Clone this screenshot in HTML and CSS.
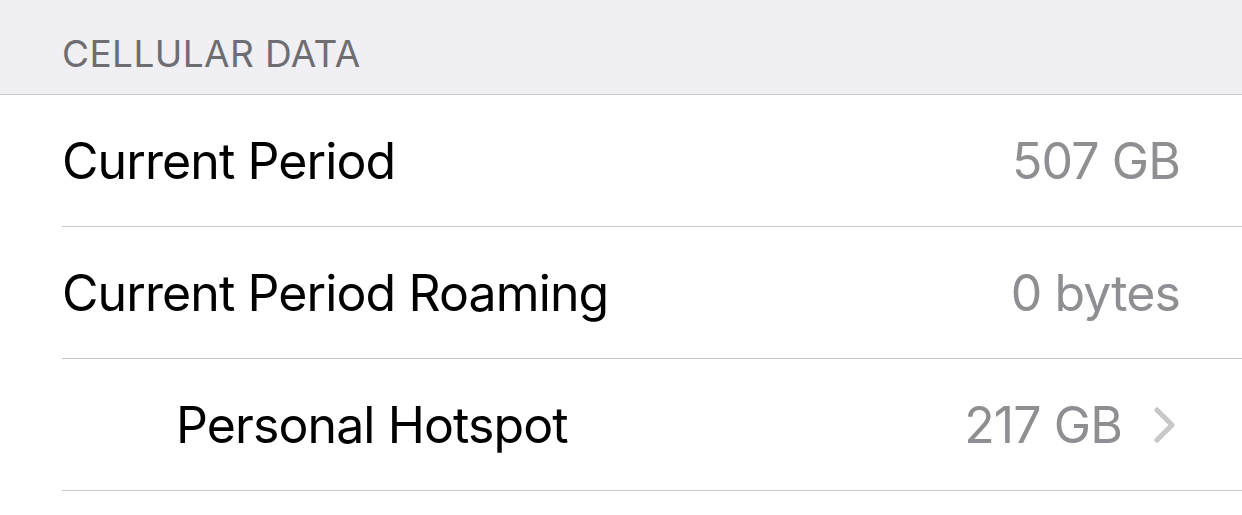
FILE: index.html
```html
<!DOCTYPE html>
<html lang="en">
<head>
  <meta charset="UTF-8" />
  <title>Cellular Data</title>
  <link rel="stylesheet" href="styles.css">
</head>
<body>
  <div class="section-header">CELLULAR DATA</div>
  <div class="group">
    <div class="row">
      <span class="label">Current Period</span>
      <span class="value">507 GB</span>
    </div>
    <div class="row">
      <span class="label">Current Period Roaming</span>
      <span class="value">0 bytes</span>
    </div>
    <div class="row indent">
      <span class="label">Personal Hotspot</span>
      <span class="value">217 GB</span>
      <svg class="chevron" width="22" height="36" viewBox="0 0 22 36">
        <path d="M3 3 L18 18 L3 33" fill="none" stroke="#c7c7cc" stroke-width="5" stroke-linecap="round" stroke-linejoin="round"/>
      </svg>
    </div>
  </div>
</body>
</html>
```

FILE: styles.css
```css
body {
  margin: 0;
  background: #fff;
  font-family: Inter, "Noto Sans", sans-serif;
}
.section-header {
  height: 95px;
  box-sizing: border-box;
  padding: 33px 0 0 62px;
  background: #efeff4;
  color: #6d6d72;
  font-size: 37px;
  line-height: 42px;
  letter-spacing: 0.4px;
  border-bottom: 1px solid #c8c7cc;
}
.group {
  background: #fff;
}
.row {
  display: flex;
  align-items: center;
  height: 131px;
  margin-left: 62px;
  padding-right: 62px;
  border-bottom: 1px solid #c8c7cc;
  font-size: 50px;
  letter-spacing: -0.9px;
}
.row .label {
  flex: 1;
  color: #000;
}
.row .value {
  color: #8e8e93;
}
.row.indent .label {
  padding-left: 114px;
}
.row.indent .value {
  margin-right: 32px;
}
.chevron {
  display: block;
  margin-right: 4px;
}
```
